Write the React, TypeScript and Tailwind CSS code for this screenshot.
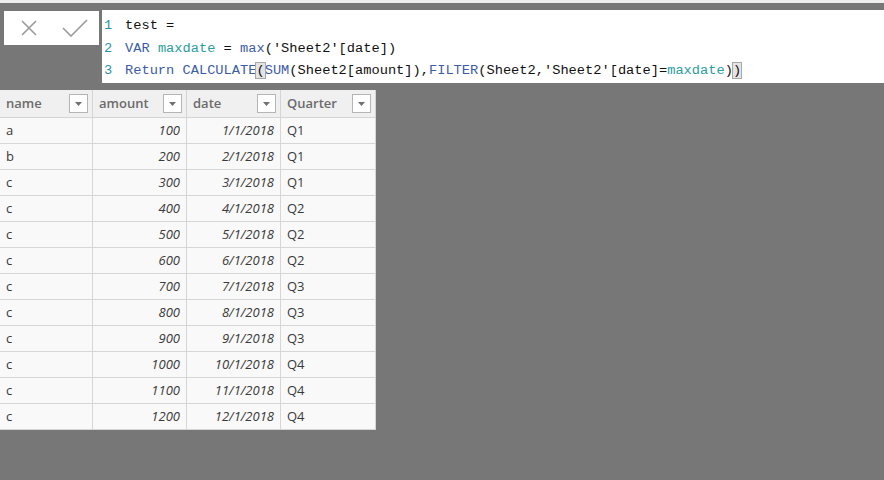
import { FC } from 'react'

const rows: [string, number, string, string][] = [
  ['a', 100, '1/1/2018', 'Q1'],
  ['b', 200, '2/1/2018', 'Q1'],
  ['c', 300, '3/1/2018', 'Q1'],
  ['c', 400, '4/1/2018', 'Q2'],
  ['c', 500, '5/1/2018', 'Q2'],
  ['c', 600, '6/1/2018', 'Q2'],
  ['c', 700, '7/1/2018', 'Q3'],
  ['c', 800, '8/1/2018', 'Q3'],
  ['c', 900, '9/1/2018', 'Q3'],
  ['c', 1000, '10/1/2018', 'Q4'],
  ['c', 1100, '11/1/2018', 'Q4'],
  ['c', 1200, '12/1/2018', 'Q4'],
]

const Kw: FC<{ children: string }> = ({ children }) => (
  <span className="text-[#3b5ca8]">{children}</span>
)
const Var: FC<{ children: string }> = ({ children }) => (
  <span className="text-[#2a9d9d]">{children}</span>
)
const Hl: FC<{ children: string }> = ({ children }) => (
  <span className="bg-[#e4e4e4] outline outline-1 outline-[#a8a8a8]">{children}</span>
)
const Ln: FC<{ n: number }> = ({ n }) => (
  <span className="inline-block w-[21px] text-[#2b91af]">{n}</span>
)

const HeaderCell: FC<{ label: string }> = ({ label }) => (
  <div className="flex items-center justify-between pl-[6px] pr-[4px] border-r border-[#d4d4d4] h-full">
    <span className="font-semibold text-[#6b6b6b]">{label}</span>
    <div className="w-[19px] h-[19px] bg-white border border-[#b5b5b5] flex items-center justify-center">
      <svg width="7" height="4" viewBox="0 0 7 4">
        <path d="M0 0h7L3.5 4z" fill="#707070" />
      </svg>
    </div>
  </div>
)

export default function App() {
  return (
    <div className="w-[884px] h-[480px] bg-[#777777] overflow-hidden flex flex-col" style={{ fontFamily: '"Open Sans", "Noto Sans", sans-serif' }}>
      <div className="h-[3px] bg-[#eeeeee] shrink-0" />
      <div className="flex gap-[3px] mt-[7px] pl-[4px]">
        <div className="w-[95px] h-[34px] mt-[1px] bg-white flex items-center pl-[16px]">
          <svg width="18" height="18" viewBox="0 0 18 18">
            <path d="M2 2L16 16M16 2L2 16" stroke="#9a9a9a" strokeWidth="1.6" fill="none" />
          </svg>
          <svg className="ml-[24px]" width="26" height="18" viewBox="0 0 26 18">
            <path d="M1 9L9 17L25 1" stroke="#9a9a9a" strokeWidth="1.6" fill="none" />
          </svg>
        </div>
        <div
          className="flex-1 h-[73px] bg-white pl-[2px] pt-[5px] text-[13.7px] leading-[22.5px] text-[#111]"
          style={{ fontFamily: '"Liberation Mono", "DejaVu Sans Mono", monospace' }}
        >
          <div className="whitespace-pre"><Ln n={1} />test =</div>
          <div className="whitespace-pre">
            <Ln n={2} />
            <Kw>VAR</Kw> <Var>maxdate</Var> = <Kw>max</Kw>('Sheet2'[date])
          </div>
          <div className="whitespace-pre">
            <Ln n={3} />
            <Kw>Return</Kw> <Kw>CALCULATE</Kw><Hl>(</Hl><Kw>SUM</Kw>(Sheet2[amount]),<Kw>FILTER</Kw>(Sheet2,'Sheet2'[date]=<Var>maxdate</Var>)<Hl>)</Hl>
          </div>
        </div>
      </div>
      <div className="mt-[7px] w-[376px] text-[13px]">
        <div className="grid grid-cols-[93px_94px_94px_95px] h-[28px] bg-[#f0f0f0] border-b border-[#d4d4d4]">
          <HeaderCell label="name" />
          <HeaderCell label="amount" />
          <HeaderCell label="date" />
          <HeaderCell label="Quarter" />
        </div>
        {rows.map(([n, a, d, q], i) => (
          <div key={i} className="grid grid-cols-[93px_94px_94px_95px] h-[26px] bg-[#f9f9f9] border-b border-[#d6d6d6] text-[#3a3a3a]">
            <div className="flex items-center px-[6px] border-r border-[#d6d6d6]">{n}</div>
            <div className="flex items-center justify-end px-[6px] border-r border-[#d6d6d6] italic">{a}</div>
            <div className="flex items-center justify-end px-[6px] border-r border-[#d6d6d6] italic">{d}</div>
            <div className="flex items-center px-[6px] border-r border-[#d6d6d6]">{q}</div>
          </div>
        ))}
      </div>
    </div>
  )
}
